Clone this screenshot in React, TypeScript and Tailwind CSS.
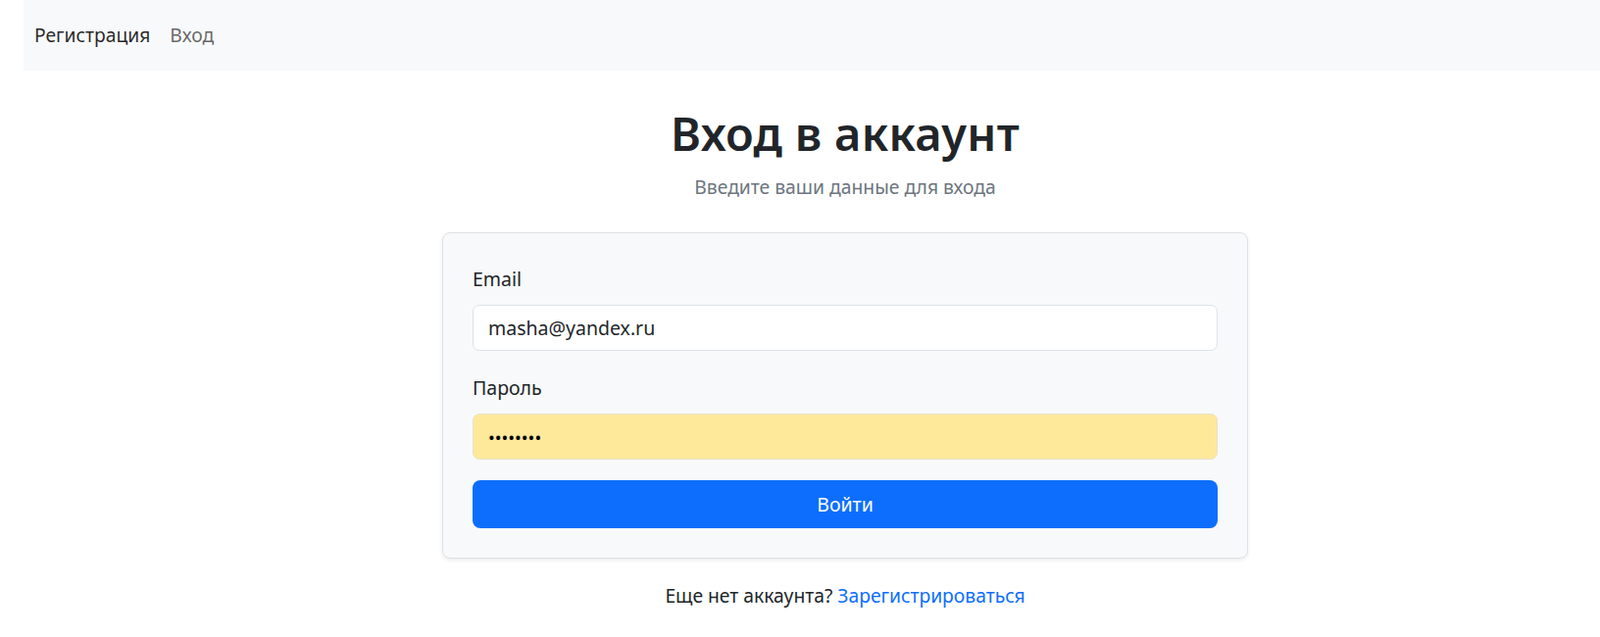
import React from "react";

export default function App() {
  const font = { fontFamily: '"Noto Sans", "Open Sans", sans-serif' };
  return (
    <div className="min-h-[650px] bg-white text-[#212529]" style={font}>
      <nav className="ml-[24px] flex h-[72px] items-center bg-[#f8f9fa] pl-[11px] text-[19.3px] leading-[30px]">
        <a className="text-[rgba(0,0,0,0.85)]">Регистрация</a>
        <a className="ml-[20px] text-[rgba(0,0,0,0.6)]">Вход</a>
      </nav>
      <main className="flex flex-col items-center pl-[92px]">
        <h1 className="mt-[37px] text-[47px] font-semibold leading-[55px] tracking-[0.3px] text-[#212529]">
          Вход в аккаунт
        </h1>
        <p className="mt-[12px] text-[19.3px] leading-[30px] text-[#6c757d]">
          Введите ваши данные для входа
        </p>
        <div className="mt-[31px] w-[822px] rounded-[8px] border border-[#dee2e6] bg-[#f8f9fa] px-[30px] pt-[32px] pb-[30px] shadow-[0_2px_4px_rgba(0,0,0,0.075)]">
          <label className="block text-[19.5px] leading-[30px]">Email</label>
          <input
            readOnly
            value="masha@yandex.ru"
            className="mt-[11px] block h-[47px] w-full rounded-[7px] border border-[#dee2e6] bg-white px-[15px] text-[19.5px] text-[#212529] outline-none"
            style={font}
          />
          <label className="mt-[23px] block text-[19.5px] leading-[30px]">Пароль</label>
          <input
            readOnly
            type="password"
            value="12345678"
            className="mt-[11px] block h-[47px] w-full rounded-[7px] border border-[#e9e3c9] bg-[#fee99b] px-[15px] text-[18px] text-black outline-none"
            style={font}
          />
          <button className="mt-[21px] flex h-[49px] w-full items-center justify-center rounded-[8px] bg-[#0d6efd] text-[19.5px] text-white">
            Войти
          </button>
        </div>
        <p className="mt-[23px] text-[19.3px] leading-[30px]">
          Еще нет аккаунта? <a className="text-[#0d6efd]">Зарегистрироваться</a>
        </p>
      </main>
    </div>
  );
}
